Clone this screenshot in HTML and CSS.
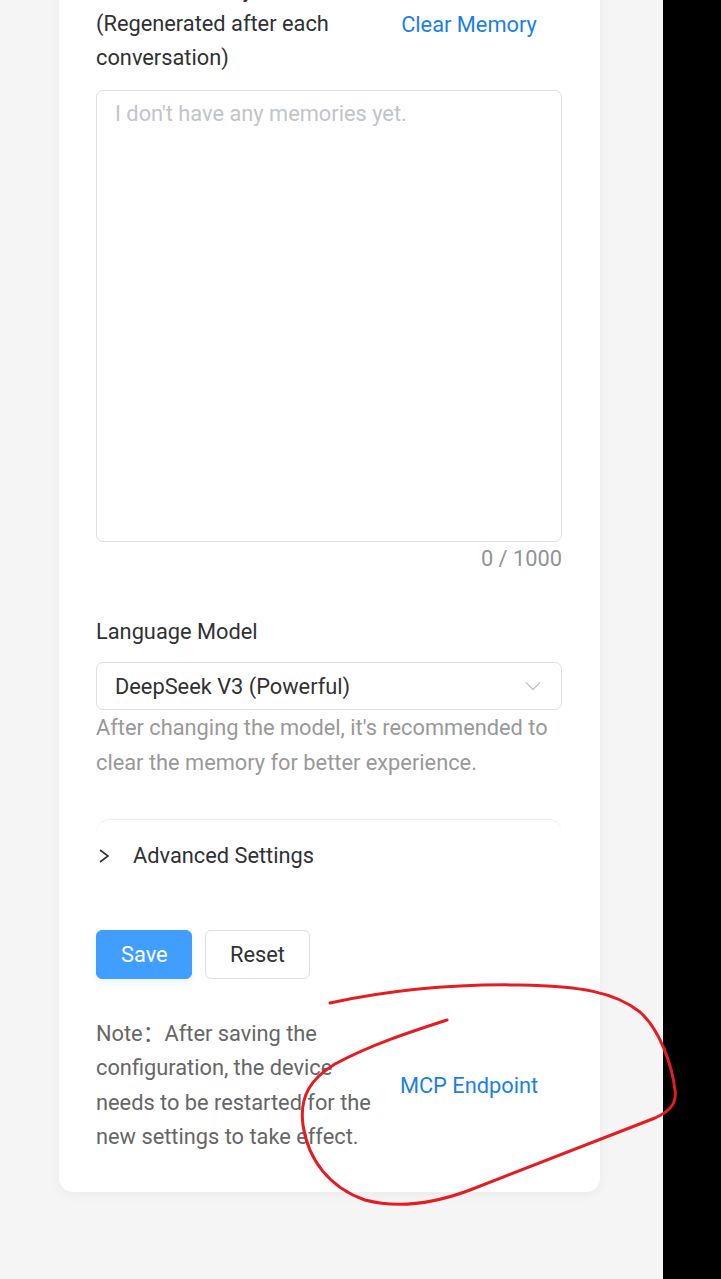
FILE: index.html
```html
<!DOCTYPE html>
<html lang="en">
<head>
    <meta charset="UTF-8">
    <meta name="viewport" content="width=device-width, initial-scale=1.0">
    <title>Agent Settings</title>
    <link rel="stylesheet" href="styles.css">
</head>
<body>

<div class="screen">
    <div class="card">

        <div class="split-row memory-row">
            <div class="split-left label">Current Memory<br>(Regenerated after each conversation)</div>
            <div class="split-right"><a class="link" href="#">Clear Memory</a></div>
        </div>

        <textarea class="memory-box" placeholder="I don't have any memories yet."></textarea>
        <div class="counter">0 / 1000</div>

        <div class="field-label">Language Model</div>
        <div class="select">
            <span>DeepSeek V3 (Powerful)</span>
            <svg class="select-arrow" width="16" height="10" viewBox="0 0 16 10">
                <path d="M1 1.5 L8 8.5 L15 1.5" fill="none" stroke="#c0c4cc" stroke-width="1.3"/>
            </svg>
        </div>
        <div class="help">After changing the model, it's recommended to clear the memory for better experience.</div>

        <div class="collapse">
            <svg class="collapse-arrow" width="12" height="14" viewBox="0 0 12 14">
                <path d="M2 1 L10 7 L2 13" fill="none" stroke="#303133" stroke-width="1.6"/>
            </svg>
            <span>Advanced Settings</span>
        </div>

        <div class="actions">
            <button class="btn btn-primary">Save</button>
            <button class="btn">Reset</button>
        </div>

        <div class="split-row note-row">
            <div class="split-left note">Note：After saving the configuration, the device needs to be restarted for the new settings to take effect.</div>
            <div class="split-right"><a class="link" href="#">MCP Endpoint</a></div>
        </div>

    </div>
</div>
<div class="side"></div>

<!-- hand drawn mark on the screenshot -->
<svg class="scribble" width="721" height="1279" viewBox="0 0 721 1279">
    <path d="M330,1003 C400,988 460,984 520,985 C580,986 615,992 640,1012 C660,1030 672,1065 675,1090 C677,1105 668,1112 655,1118 L470,1190 C430,1205 395,1208 365,1200 C330,1188 308,1160 303,1125 C299,1095 312,1078 335,1064 C370,1045 410,1032 447,1020"
          fill="none" stroke="#e31d23" stroke-width="3" stroke-linecap="round"/>
</svg>

</body>
</html>
```

FILE: styles.css
```css
html, body {
    margin: 0;
    height: 1279px;
    overflow: hidden;
}
body {
    display: flex;
    background: #000;
    font-family: Roboto, "Noto Sans CJK SC", sans-serif;
    font-size: 21.8px;
    color: #303133;
}
.screen {
    width: 663px;
    height: 1279px;
    background: #f5f5f5;
    overflow: hidden;
}
.side {
    flex: 1;
    background: #000;
}
.card {
    margin: -27px 0 0 59px;
    width: 541px;
    box-sizing: border-box;
    padding: 0 38px 38px 37px;
    background: #fff;
    border-radius: 0 0 14px 14px;
    box-shadow: 0 2px 12px rgba(0, 0, 0, 0.05);
}
.split-row {
    display: flex;
    align-items: center;
}
.split-left {
    width: 280px;
    line-height: 34px;
}
.split-right {
    flex: 1;
    text-align: center;
}
.link {
    color: #1b7fe9;
    text-decoration: none;
}
.memory-box {
    display: block;
    margin-top: 15px;
    width: 100%;
    height: 452px;
    box-sizing: border-box;
    padding: 10px 18px;
    border: 1px solid #dcdfe6;
    border-radius: 7px;
    font-family: inherit;
    font-size: 21.8px;
    line-height: 26px;
    color: #303133;
    outline: none;
    resize: none;
}
.memory-box::placeholder {
    color: #c0c4cc;
}
.counter {
    margin-top: 4px;
    text-align: right;
    line-height: 26px;
    color: #909399;
}
.field-label {
    margin-top: 43px;
    line-height: 34px;
}
.select {
    margin-top: 13px;
    height: 48px;
    box-sizing: border-box;
    padding: 0 18px;
    border: 1px solid #dcdfe6;
    border-radius: 7px;
    display: flex;
    align-items: center;
    justify-content: space-between;
}
.select-arrow {
    margin-right: 2px;
}
.help {
    line-height: 35px;
    color: #999;
}
.collapse {
    margin-top: 39px;
    height: 72px;
    display: flex;
    align-items: center;
    border-top: 1px solid #eeeeee;
    border-radius: 14px 14px 0 0;
    box-sizing: border-box;
}
.collapse-arrow {
    margin: 0 23px 0 2px;
}
.actions {
    margin-top: 39px;
    display: flex;
    gap: 13px;
}
.btn {
    height: 49px;
    padding: 0 24px;
    font-family: inherit;
    font-size: 21.8px;
    color: #303133;
    background: #fff;
    border: 1px solid #dcdfe6;
    border-radius: 6px;
    cursor: pointer;
}
.btn-primary {
    width: 96px;
    color: #fff;
    background: #409eff;
    border-color: #409eff;
    box-shadow: 0 3px 6px rgba(64, 158, 255, 0.12);
}
.note-row {
    margin-top: 38px;
}
.note {
    line-height: 34.3px;
    color: #666;
}
.scribble {
    position: absolute;
    top: 0;
    left: 0;
    pointer-events: none;
}
```
